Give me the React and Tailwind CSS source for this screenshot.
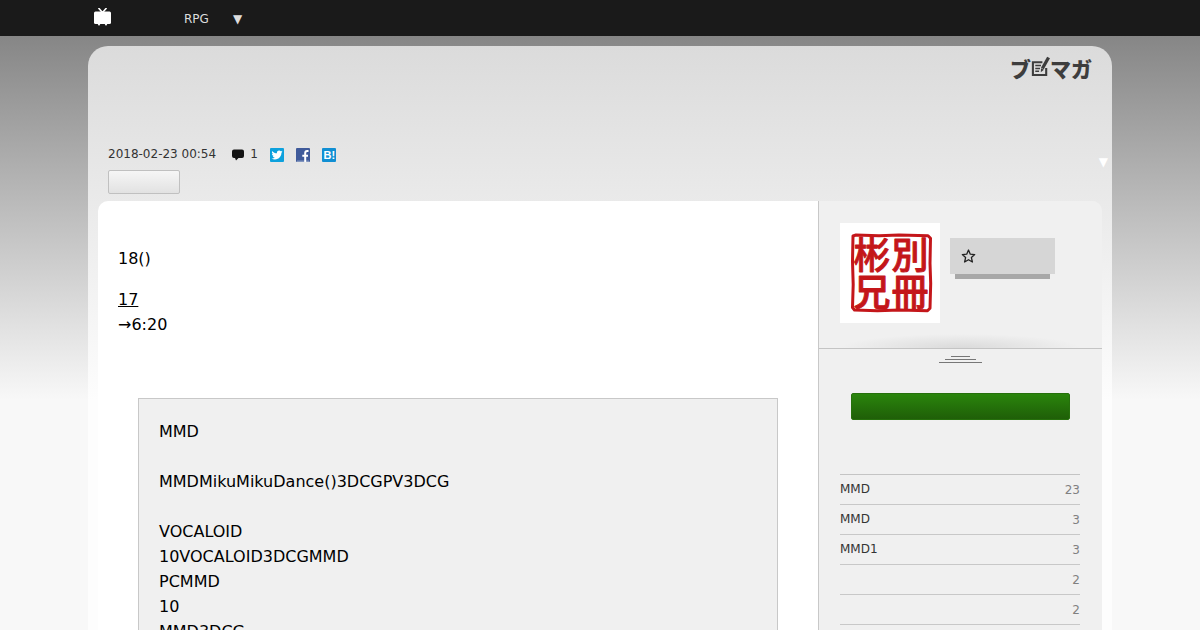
import React from "react";

const CATEGORIES = [
  { name: "MMD", count: 23 },
  { name: "MMD", count: 3 },
  { name: "MMD1", count: 3 },
  { name: "", count: 2 },
  { name: "", count: 2 },
];

const QUOTE = [
  "MMD",
  "",
  "MMDMikuMikuDance()3DCGPV3DCG",
  "",
  "VOCALOID",
  "10VOCALOID3DCGMMD",
  "PCMMD",
  "10",
  "MMD3DCG",
];

function TvIcon() {
  return (
    <svg width="17" height="18" viewBox="0 0 17 18" fill="#fff" aria-hidden="true">
      <path d="M4.500 0 8.500 4.500 12.500 0" fill="none" stroke="#fff" strokeWidth="1.600" />
      <rect x="0" y="3.500" width="17" height="12.500" rx="1.500" />
      <path d="M3.500 15.500h3l-1 2h-1zM10.500 15.500h3l-1 2h-1z" />
    </svg>
  );
}

function CommentIcon() {
  return (
    <svg width="12" height="12" viewBox="0 0 12 12" fill="#141414" aria-hidden="true" className="mt-0.5">
      <path d="M2 0.500h8q2 0 2 2v4.500q0 2-2 2H6.500L4 11.500 3 9H2Q0 9 0 7V2.500q0-2 2-2z" />
    </svg>
  );
}

function TwitterIcon() {
  return (
    <svg width="14" height="14" viewBox="0 0 14 14" aria-hidden="true">
      <rect width="14" height="14" rx="1" fill="#0da1dd" />
      <g transform="translate(1.500 1.500) scale(.46)">
        <path
          fill="#fff"
          d="M23.950 4.570a10 10 0 0 1-2.820.770 4.960 4.960 0 0 0 2.160-2.720c-.950.550-2 .950-3.130 1.180a4.920 4.920 0 0 0-8.380 4.480C7.690 8.090 4.070 6.130 1.640 3.160a4.920 4.920 0 0 0 1.520 6.570 4.900 4.900 0 0 1-2.230-.610v.060a4.920 4.920 0 0 0 3.950 4.830 5 5 0 0 1-2.210.080 4.940 4.940 0 0 0 4.600 3.420A9.870 9.870 0 0 1 0 19.540a14 14 0 0 0 7.550 2.210c9.050 0 14-7.500 14-13.980l-.020-.640a9.900 9.900 0 0 0 2.420-2.560z"
        />
      </g>
    </svg>
  );
}

function FacebookIcon() {
  return (
    <svg width="14" height="14" viewBox="0 0 14 14" aria-hidden="true">
      <rect width="14" height="14" rx="1" fill="#3f5a9a" />
      <path d="M1 12.500h12V14H1z" fill="#8195bf" />
      <path d="M12.500 3h-1.300q-2 0-2 2V14M6.300 7.800h5.700" fill="none" stroke="#fff" strokeWidth="2" />
    </svg>
  );
}

function HatenaIcon() {
  return (
    <svg width="14" height="14" viewBox="0 0 14 14" aria-hidden="true">
      <rect width="14" height="14" rx="1" fill="#118fd3" />
      <text x="1.500" y="11" fill="#fff" fontFamily="Liberation Sans, sans-serif" fontWeight="700" fontSize="11">
        B!
      </text>
    </svg>
  );
}

function NotePadIcon() {
  return (
    <svg width="19" height="22" viewBox="0 0 20 22" fill="none" stroke="#3d3d3d" aria-hidden="true" className="-mt-0.5">
      <path d="M12 6H2v13.500h14V12" strokeWidth="2.200" />
      <path d="M4.500 9.500h6M4.500 12.500h5M4.500 15.500h4" strokeWidth="1.500" />
      <path d="M18.500 1 12 12.500" strokeWidth="3.400" />
      <path d="m10.300 16.500.300-4.300 3 1.700z" fill="#3d3d3d" stroke="none" />
    </svg>
  );
}

function SealAvatar() {
  return (
    <svg width="100" height="100" viewBox="0 0 100 100" role="img" aria-label="彬兄別冊">
      <rect width="100" height="100" fill="#fff" />
      <path
        d="M13 13 16 12l23 .700 20-.700 29 .700 2.500 2.500-.500 25 .700 20-.700 25-2.500 2.500-28-.700-22 .700-23-.700-2-2.500.700-23-.700-23z"
        fill="none"
        stroke="#c4161a"
        strokeWidth="3"
        strokeLinejoin="round"
      />
      <g
        fill="#c4161a"
        stroke="#c4161a"
        strokeWidth=".9"
        strokeLinejoin="round"
        fontFamily="Noto Sans CJK JP, sans-serif"
        fontWeight="500"
        fontSize="37"
        textAnchor="middle"
      >
        <text x="32" y="46">彬</text>
        <text x="32" y="83">兄</text>
        <text x="70" y="46">別</text>
        <text x="70" y="83">冊</text>
      </g>
    </svg>
  );
}

function StarIcon() {
  return (
    <svg width="15" height="15" viewBox="0 0 15 15" fill="none" stroke="#222" strokeWidth="1.300" strokeLinejoin="round" aria-hidden="true">
      <path d="m7.500 1 1.800 4.200 4.400.400-3.300 3 1 4.400-3.900-2.300L3.600 13l1-4.400-3.300-3 4.400-.400z" />
    </svg>
  );
}

function TopBar() {
  return (
    <header className="h-9 bg-[#1a1a1a] text-xs text-[#ddd]">
      <nav className="mx-auto flex h-full max-w-[1024px] items-center px-1.5">
        <a href="#top" aria-label="TV" className="mb-0.5 w-[90px]">
          <TvIcon />
        </a>
        <a href="#rpg" className="pt-0.5">RPG</a>
        <button type="button" aria-label="Menu" className="ml-6 pt-0.5 text-xs">
          ▼
        </button>
      </nav>
    </header>
  );
}

function BlogHeader() {
  return (
    <div>
      <div className="flex h-[98px] items-start justify-end px-5 pt-2.5">
        <a
          href="#blomaga"
          aria-label="ブロマガ"
          className="flex items-center font-['Noto_Sans_CJK_JP',sans-serif] text-[21px]/6 font-black text-[#3d3d3d]"
        >
          <span>ブ</span>
          <NotePadIcon />
          <span>マガ</span>
        </a>
      </div>
      <div className="flex items-start justify-between">
        <div className="px-5">
          <div className="flex h-5 items-center text-xs text-[#333]">
            <time dateTime="2018-02-23T00:54">2018-02-23 00:54</time>
            <a href="#comments" className="ml-4 flex items-center gap-1.5">
              <CommentIcon />
              <span>1</span>
            </a>
            <div className="ml-3 flex items-center gap-3 pt-0.5">
              <a href="#twitter" aria-label="Twitter"><TwitterIcon /></a>
              <a href="#facebook" aria-label="Facebook"><FacebookIcon /></a>
              <a href="#hatena" aria-label="Hatena"><HatenaIcon /></a>
            </div>
          </div>
          <button
            type="button"
            aria-label="Tag"
            className="mt-1.5 block h-6 w-[72px] rounded-xs border border-[#c0c0c0] bg-linear-to-b from-[#f6f6f6] to-[#e2e2e2]"
          />
        </div>
        <button type="button" aria-label="Open" className="mt-2.5 mr-1 h-4 text-xs/4 text-white">
          ▼
        </button>
      </div>
    </div>
  );
}

function Article() {
  return (
    <article className="min-w-0 flex-1 rounded-tl-[10px] bg-white px-5 pt-[45px] text-base/[25px] text-black">
      <p>18()</p>
      <p className="mt-4">
        <a href="#17" className="underline">17</a>
      </p>
      <p>→6:20</p>
      <div className="mx-5 mt-[61px] border border-[#c8c8c8] bg-[#f0f0f0] p-5">
        {QUOTE.map((line, i) => (
          <p key={i} className="min-h-[25px] break-words">{line}</p>
        ))}
      </div>
    </article>
  );
}

function Sidebar() {
  return (
    <aside className="w-[284px] shrink-0 rounded-tr-[10px] border-l border-[#c8c8c8] bg-[#f0f0f0]">
      <section className="flex h-[148px] gap-2.5 rounded-tr-[10px] border-b border-[#c4c4c4] bg-[radial-gradient(ellipse_120px_14px_at_bottom,#dadada,#f0f0f0)] pt-[22px] pl-[21px]">
        <SealAvatar />
        <div className="pt-[15px]">
          <button type="button" aria-label="Follow" className="flex h-9 w-[105px] items-center bg-[#d6d6d6] pl-[11px]">
            <StarIcon />
          </button>
          <div className="mx-[5px] h-[5px] bg-[#a8a8a8]" />
        </div>
      </section>
      <div className="flex flex-col items-center gap-0.5 pt-[7px]">
        <span className="h-px w-[19px] bg-[#777]" />
        <span className="h-px w-[31px] bg-[#777]" />
        <span className="h-px w-[43px] bg-[#777]" />
      </div>
      <div className="px-8 pt-[30px]">
        <button
          type="button"
          aria-label="Subscribe"
          className="block h-[27px] w-full rounded-xs border border-[#26700c] bg-linear-to-b from-[#2a850c] to-[#1f5f08]"
        />
      </div>
      <ul className="mt-[54px] mr-[22px] ml-[21px] border-t border-[#c4c4c4] text-xs">
        {CATEGORIES.map((c, i) => (
          <li key={i} className="flex h-[30px] items-center justify-between border-b border-[#c8c8c8] pb-0.5">
            <a href="#category" className="text-[#333]">{c.name}</a>
            <span className="pt-0.5 text-[#808080]">{c.count}</span>
          </li>
        ))}
      </ul>
    </aside>
  );
}

export default function App() {
  return (
    <div
      id="top"
      className="flex min-h-screen flex-col bg-[#f8f8f8] bg-[linear-gradient(#868686_36px,#f8f8f8_400px)] font-['DejaVu_Sans',sans-serif]"
    >
      <TopBar />
      <main className="mx-auto mt-2.5 flex w-full max-w-[1024px] flex-1 flex-col rounded-t-[20px] bg-[#fdfdfd] bg-[linear-gradient(#dbdbdb,#fdfdfd_355px)]">
        <BlogHeader />
        <div className="mx-2.5 mt-[7px] flex flex-1">
          <Article />
          <Sidebar />
        </div>
      </main>
    </div>
  );
}
